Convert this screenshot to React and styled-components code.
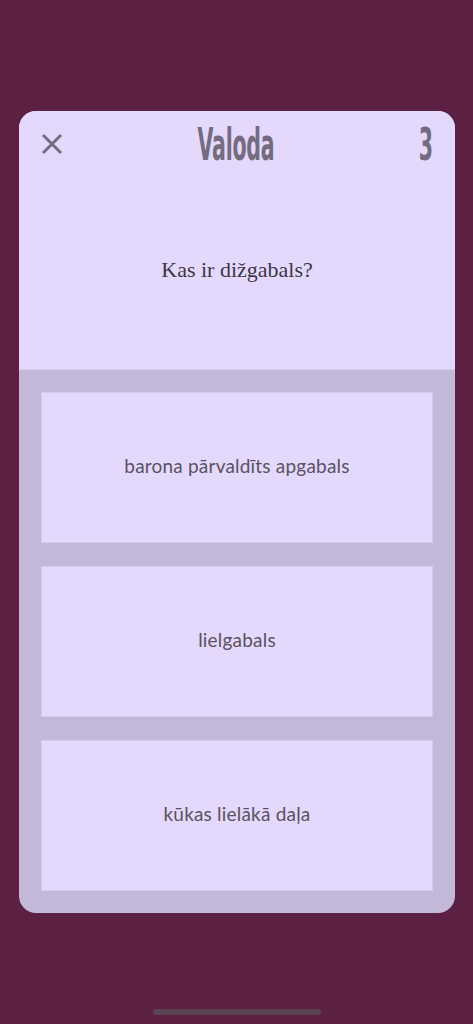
import React from "react";
import styled, { createGlobalStyle } from "styled-components";

const GlobalStyle = createGlobalStyle`
  html, body {
    margin: 0;
    padding: 0;
    background: #5c2042;
  }
  #root {
    min-height: 1024px;
  }
`;

const Screen = styled.div`
  width: 473px;
  height: 1024px;
  display: flex;
  flex-direction: column;
  align-items: center;
  background: #5c2042;
  padding-top: 111px;
  box-sizing: border-box;
`;

const Card = styled.div`
  width: 436px;
  height: 802px;
  margin-left: 1px;
  border-radius: 17px;
  overflow: hidden;
  display: flex;
  flex-direction: column;
  background: #c4b8d8;
`;

const Top = styled.section`
  height: 258px;
  background: #e4d9fd;
  display: flex;
  flex-direction: column;
  border-bottom: 1px solid #d8ccf0;
`;

const Header = styled.header`
  height: 68px;
  display: grid;
  grid-template-columns: 60px 1fr 60px;
  align-items: center;
  padding: 0 22px 0 20px;
`;

const CloseButton = styled.button`
  width: 26px;
  height: 26px;
  padding: 0;
  border: none;
  background: none;
  display: flex;
  align-items: center;
  justify-content: center;
  margin-top: -3px;
`;

const Title = styled.h1`
  margin: 0;
  font-family: "DejaVu Sans Condensed", "DejaVu Sans", sans-serif;
  font-weight: bold;
  font-size: 44px;
  color: #756b80;
  text-align: center;
  transform: scaleX(0.52);
  letter-spacing: -0.5px;
  margin-top: -1px;
`;

const Counter = styled.div`
  font-family: "DejaVu Sans Condensed", "DejaVu Sans", sans-serif;
  font-weight: bold;
  font-size: 44px;
  color: #756b80;
  text-align: right;
  transform: scaleX(0.52);
  transform-origin: right center;
  margin-top: -1px;
`;

const Question = styled.div`
  flex: 1;
  display: flex;
  align-items: center;
  justify-content: center;
  padding-bottom: 8px;
  font-family: "Liberation Serif", "Times New Roman", serif;
  font-size: 22px;
  color: #3e3644;
`;

const Answers = styled.section`
  flex: 1;
  display: flex;
  flex-direction: column;
  gap: 23px;
  padding: 22px;
`;

const Answer = styled.button`
  flex: 1;
  border: 1px solid #d6cbef;
  background: #e4d9fd;
  font-family: Lato, "Noto Sans", sans-serif;
  font-size: 19px;
  color: #5a5260;
  letter-spacing: 0.2px;
  padding: 0 0 5px;
  cursor: pointer;
`;

const HomeBar = styled.div`
  margin-top: auto;
  margin-bottom: 9px;
  width: 168px;
  height: 6px;
  border-radius: 3px;
  background: #5a4352;
`;

const answers = ["barona pārvaldīts apgabals", "lielgabals", "kūkas lielākā daļa"];

export default function App() {
  return (
    <>
      <GlobalStyle />
      <Screen>
        <Card>
          <Top>
            <Header>
              <CloseButton aria-label="Aizvērt">
                <svg width="22" height="22" viewBox="0 0 22 22">
                  <path
                    d="M2 2 L20 20 M20 2 L2 20"
                    stroke="#756b80"
                    strokeWidth="3"
                    strokeLinecap="butt"
                  />
                </svg>
              </CloseButton>
              <Title>Valoda</Title>
              <Counter>3</Counter>
            </Header>
            <Question>Kas ir dižgabals?</Question>
          </Top>
          <Answers>
            {answers.map((a) => (
              <Answer key={a}>{a}</Answer>
            ))}
          </Answers>
        </Card>
        <HomeBar />
      </Screen>
    </>
  );
}
